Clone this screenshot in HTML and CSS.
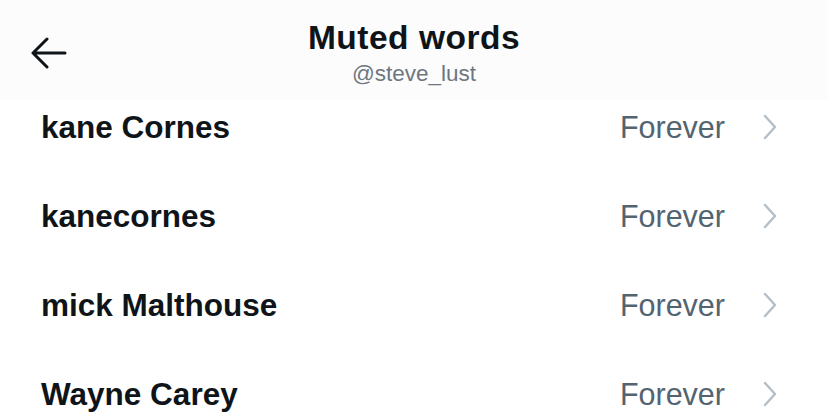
FILE: index.html
```html
<!DOCTYPE html>
<html lang="en">
  <head>
    <meta charset="UTF-8" />
    <meta name="viewport" content="width=device-width, initial-scale=1.0" />
    <title>Muted words</title>
    <link rel="stylesheet" href="styles.css">
  </head>
  <body>
    <div class="screen">
      <div class="header">
        <div class="back">
          <svg width="36" height="32" viewBox="0 0 36 32">
            <path d="M34 16 H2 M16 2 L2 16 L16 30" fill="none" stroke="#0f1419" stroke-width="3" stroke-linecap="round" stroke-linejoin="round" />
          </svg>
        </div>
        <div class="title">
          <h1>Muted words</h1>
          <p>@steve_lust</p>
        </div>
        <div></div>
      </div>

      <ul class="words">
        <li class="word">
          <span class="name">kane Cornes</span>
          <span class="duration">Forever</span>
          <svg class="chevron" width="14" height="26" viewBox="0 0 14 26">
            <path d="M2 2 L12 13 L2 24" fill="none" stroke="#b4bfc8" stroke-width="2.5" stroke-linecap="round" stroke-linejoin="round" />
          </svg>
        </li>
        <li class="word">
          <span class="name">kanecornes</span>
          <span class="duration">Forever</span>
          <svg class="chevron" width="14" height="26" viewBox="0 0 14 26">
            <path d="M2 2 L12 13 L2 24" fill="none" stroke="#b4bfc8" stroke-width="2.5" stroke-linecap="round" stroke-linejoin="round" />
          </svg>
        </li>
        <li class="word">
          <span class="name">mick Malthouse</span>
          <span class="duration">Forever</span>
          <svg class="chevron" width="14" height="26" viewBox="0 0 14 26">
            <path d="M2 2 L12 13 L2 24" fill="none" stroke="#b4bfc8" stroke-width="2.5" stroke-linecap="round" stroke-linejoin="round" />
          </svg>
        </li>
        <li class="word">
          <span class="name">Wayne Carey</span>
          <span class="duration">Forever</span>
          <svg class="chevron" width="14" height="26" viewBox="0 0 14 26">
            <path d="M2 2 L12 13 L2 24" fill="none" stroke="#b4bfc8" stroke-width="2.5" stroke-linecap="round" stroke-linejoin="round" />
          </svg>
        </li>
      </ul>
    </div>
  </body>
</html>
```

FILE: styles.css
```css
* {
  margin: 0;
  padding: 0;
  box-sizing: border-box;
}
body {
  font-family: "Liberation Sans", Arial, sans-serif;
  background-color: #fff;
  color: #0f1419;
}

.screen {
  width: 828px;
  height: 420px;
  overflow: hidden;
}

.header {
  height: 100px;
  display: grid;
  grid-template-columns: 1fr auto 1fr;
  background-color: #fcfcfc;
}

.back {
  padding: 37px 0 0 31px;
}

.back svg {
  display: block;
}

.title {
  text-align: center;
  padding-top: 20px;
}

.title h1 {
  font-size: 33.5px;
  line-height: 36px;
  font-weight: 700;
  letter-spacing: 0.5px;
}

.title p {
  margin-top: 5px;
  font-size: 22.5px;
  line-height: 26px;
  color: #6e7781;
}

.words {
  list-style: none;
}

.word {
  height: 89px;
  display: flex;
  align-items: flex-start;
  padding: 9px 51px 0 41px;
}

.name {
  flex: 1;
  font-size: 31.5px;
  line-height: 36px;
  font-weight: 700;
}

.duration {
  font-size: 30.5px;
  line-height: 36px;
  color: #536471;
}

.chevron {
  margin: 5px 0 0 38px;
}
```
